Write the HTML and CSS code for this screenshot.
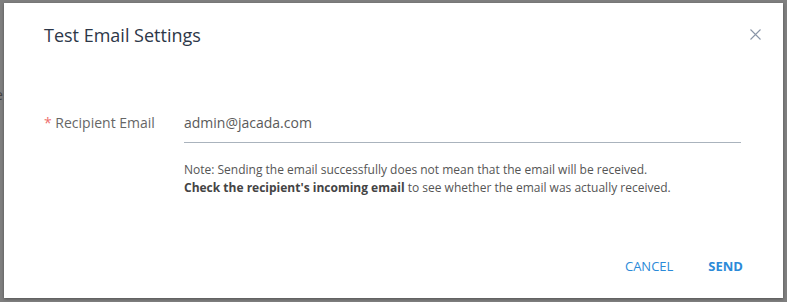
FILE: index.html
```html
<!DOCTYPE html>
<html>
<head>
<meta charset="utf-8">
<link rel="stylesheet" href="styles.css">
</head>
<body>
<div class="backdrop">
  <span class="behind">e</span>
  <div class="dialog">
    <div class="header">
      <h2 class="title">Test Email Settings</h2>
      <button class="close" aria-label="Close">
        <svg width="11" height="11" viewBox="0 0 11 11"><path d="M0.5 0.5 L10.5 10.5 M10.5 0.5 L0.5 10.5" stroke="#8a96a8" stroke-width="1.1" fill="none"/></svg>
      </button>
    </div>
    <div class="body">
      <div class="field">
        <label class="label"><span class="req">*</span> Recipient Email</label>
        <div class="control">
          <div class="input">admin@jacada.com</div>
          <p class="note">Note: Sending the email successfully does not mean that the email will be received.<br><b>Check the recipient's incoming email</b> to see whether the email was actually received.</p>
        </div>
      </div>
    </div>
    <div class="footer">
      <button class="btn">CANCEL</button>
      <button class="btn primary">SEND</button>
    </div>
  </div>
</div>
</body>
</html>
```
FILE: styles.css
```css
html, body { margin: 0; padding: 0; }
body {
  background: #7f7f7f;
  font-family: "Open Sans", "Noto Sans", sans-serif;
  width: 787px;
  height: 302px;
  overflow: hidden;
}
.backdrop {
  position: relative;
  padding: 3px 0 0 4px;
  height: 299px;
  box-sizing: border-box;
}
.behind {
  position: absolute;
  left: -5px;
  top: 85px;
  font-size: 14px;
  color: #444;
}
.dialog {
  position: relative;
  width: 779px;
  height: 295px;
  background: #fff;
  box-shadow: 0 1px 3px rgba(0,0,0,0.35);
  box-sizing: border-box;
  display: flex;
  flex-direction: column;
}
.header {
  display: flex;
  justify-content: space-between;
  align-items: flex-start;
  padding: 20px 22px 0 40px;
}
.title {
  margin: 0;
  font-size: 18px;
  font-weight: 400;
  color: #2d3748;
  line-height: 24px;
}
.close {
  border: 0;
  background: none;
  padding: 0;
  margin-top: 6px;
  width: 11px;
  height: 11px;
  cursor: pointer;
}
.close svg { display: block; }
.body {
  padding: 66px 42px 0 40px;
  flex: 1;
}
.field {
  display: flex;
}
.label {
  width: 140px;
  font-size: 14px;
  color: #666;
  line-height: 20px;
}
.req { color: #ee6e6e; }
.control { flex: 1; }
.input {
  font-size: 14px;
  color: #5a5a5a;
  line-height: 20px;
  padding-bottom: 9px;
  border-bottom: 1px solid #aab3bd;
}
.note {
  margin: 18px 0 0;
  font-size: 12px;
  line-height: 18px;
  color: #555;
}
.note b { font-weight: 700; color: #444; }
.footer {
  display: flex;
  justify-content: flex-end;
  gap: 35px;
  padding: 0 40px 23px 0;
}
.btn {
  border: 0;
  background: none;
  padding: 0;
  font-family: inherit;
  font-size: 13px;
  color: #2b8ad8;
  letter-spacing: 0;
  cursor: pointer;
}
.btn.primary { font-weight: 700; }
```
